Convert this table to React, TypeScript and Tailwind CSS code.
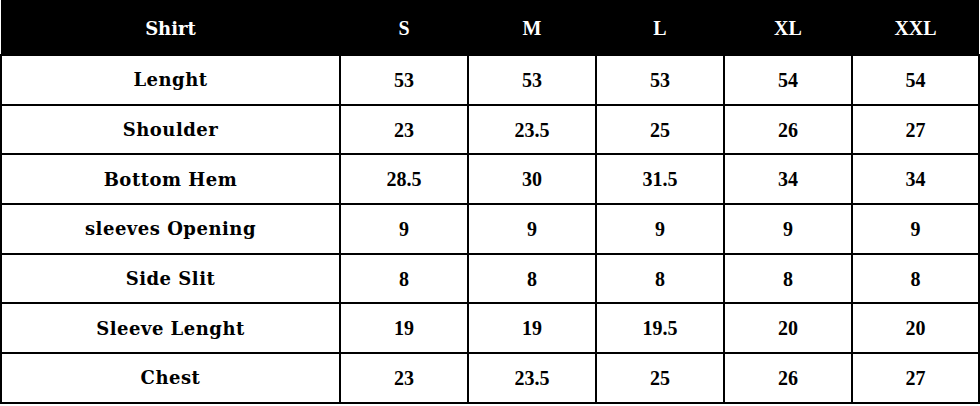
import React from "react";

const cols = ["S", "M", "L", "XL", "XXL"];
const rows: [string, string[]][] = [
  ["Lenght", ["53", "53", "53", "54", "54"]],
  ["Shoulder", ["23", "23.5", "25", "26", "27"]],
  ["Bottom Hem", ["28.5", "30", "31.5", "34", "34"]],
  ["sleeves Opening", ["9", "9", "9", "9", "9"]],
  ["Side Slit", ["8", "8", "8", "8", "8"]],
  ["Sleeve Lenght", ["19", "19", "19.5", "20", "20"]],
  ["Chest", ["23", "23.5", "25", "26", "27"]],
];

export default function App() {
  return (
    <div className="w-[980px] h-[406px] bg-white">
      <table
        className="border-collapse w-[978px] table-fixed"
        style={{ fontFamily: '"Liberation Serif", serif' }}
      >
        <colgroup>
          <col className="w-[339px]" />
          <col className="w-[128px]" />
          <col className="w-[128px]" />
          <col className="w-[128px]" />
          <col className="w-[128px]" />
          <col className="w-[127px]" />
        </colgroup>
        <thead>
          <tr className="bg-black text-white h-[55px]">
            <th
              className="font-bold text-[18px] text-center pt-[2px]"
              style={{ fontFamily: '"DejaVu Serif", serif' }}
            >
              Shirt
            </th>
            {cols.map((c) => (
              <th key={c} className="font-bold text-[20px] text-center pt-[2px]">
                {c}
              </th>
            ))}
          </tr>
        </thead>
        <tbody>
          {rows.map(([label, vals]) => (
            <tr key={label} className="h-[49.7px]">
              <td
                className="border-2 border-black text-center font-bold text-[18px] text-black tracking-[0.5px]"
                style={{ fontFamily: '"DejaVu Serif", serif' }}
              >
                {label}
              </td>
              {vals.map((v, i) => (
                <td
                  key={i}
                  className="border-2 border-black text-center font-bold text-[20px] text-black"
                >
                  {v}
                </td>
              ))}
            </tr>
          ))}
        </tbody>
      </table>
    </div>
  );
}
